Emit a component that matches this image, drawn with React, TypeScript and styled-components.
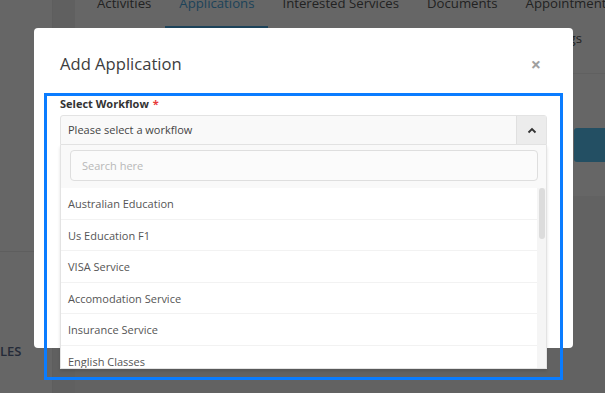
import React from "react";
import styled, { createGlobalStyle } from "styled-components";

const Global = createGlobalStyle`
  html, body { margin: 0; padding: 0; background: #fff; }
  body { font-family: "Open Sans", "Liberation Sans", sans-serif; }
  * { box-sizing: border-box; }
`;

const Screen = styled.div`
  position: relative;
  width: 605px;
  height: 393px;
  overflow: hidden;
  display: grid;
  grid-template-columns: 53px 22px 1fr;
  background: #fff;
`;

const Sidebar = styled.aside`
  display: flex;
  flex-direction: column;
  background: #fff;
  border-right: 1px solid #eaeaea;
  overflow: hidden;
`;

const SideSection = styled.div`
  height: 252px;
  border-bottom: 1px solid #ececec;
`;

const SideItem = styled.div`
  margin-top: 90px;
  margin-left: -11px;
  font-size: 13px;
  font-weight: 600;
  color: #5a6c8e;
  white-space: nowrap;
  line-height: 18px;
`;

const Gutter = styled.div`
  background: #f0f0f0;
`;

const Main = styled.main`
  display: flex;
  flex-direction: column;
  background: #f5f5f5;
  overflow: hidden;
`;

const TopCard = styled.div`
  background: #fff;
  display: flex;
  flex-direction: column;
`;

const TabBar = styled.nav`
  display: flex;
  margin-top: -7px;
  padding-left: 8px;
  white-space: nowrap;
`;

const Tab = styled.div<{ $active?: boolean }>`
  padding: 0 14px 13px;
  line-height: 20px;
  font-size: 13.2px;
  color: ${(p) => (p.$active ? "#4aa8e0" : "#555")};
  border-bottom: 2px solid ${(p) => (p.$active ? "#4aa8e0" : "transparent")};
`;

const SecondTab = styled.span`
  line-height: 20px;
  font-size: 13.2px;
  color: #555;
`;

const TabRow2 = styled.div`
  display: flex;
  justify-content: flex-end;
  padding: 0 23px 25px 0;
  border-bottom: 1px solid #f0f0f0;
`;

const Toolbar = styled.div`
  display: flex;
  justify-content: flex-end;
  padding-top: 54px;
  margin-right: -60px;
`;

const PrimaryButton = styled.button`
  height: 34px;
  width: 91px;
  border: none;
  border-radius: 3px;
  background: #58c6f8;
  color: #fff;
  font: inherit;
  font-size: 12px;
  padding-left: 40px;
`;

const TableHead = styled.div`
  height: 34px;
  background: #fff;
`;

const Backdrop = styled.div`
  position: absolute;
  inset: 0;
  background: rgba(0, 0, 0, 0.6);
`;

const Modal = styled.div`
  position: absolute;
  left: 34px;
  top: 28px;
  width: 539px;
  height: 320px;
  background: #fff;
  border-radius: 4px;
`;

const ModalHeader = styled.div`
  display: flex;
  align-items: center;
  justify-content: space-between;
  padding: 24px 32px 21px 26px;
`;

const Title = styled.h4`
  margin: 0;
  font-size: 16.6px;
  line-height: 24px;
  font-weight: 500;
  color: #3d3d3d;
`;

const Close = styled.button`
  border: none;
  background: none;
  padding: 0;
  font: inherit;
  font-size: 18px;
  font-weight: 700;
  line-height: 20px;
  color: #a0a0a0;
`;

const ModalBody = styled.div`
  padding: 0 26px;
`;

const Label = styled.label`
  display: block;
  font-size: 11px;
  font-weight: 700;
  line-height: 14px;
  color: #333;
  margin-bottom: 4px;
`;

const Required = styled.span`
  color: #e83a3a;
  margin-left: 4px;
`;

const SelectBox = styled.div`
  display: flex;
  height: 30px;
  border: 1px solid #e3e3e3;
  border-radius: 3px 3px 0 0;
  background: #f9f9f9;
`;

const SelectValue = styled.div`
  flex: 1;
  padding-left: 7px;
  font-size: 11px;
  line-height: 28px;
  color: #444;
`;

const Caret = styled.div`
  width: 30px;
  display: flex;
  align-items: center;
  justify-content: center;
  background: #ececec;
  border-left: 1px solid #e0e0e0;
`;

const Dropdown = styled.div`
  position: relative;
  border: 1px solid #e3e3e3;
  border-top: none;
  background: #fff;
  box-shadow: 0 2px 3px rgba(0, 0, 0, 0.12);
`;

const SearchArea = styled.div`
  background: #f9f9f9;
  padding: 5px 8px 7px 9px;
`;

const SearchInput = styled.input`
  width: 100%;
  height: 31px;
  border: 1px solid #dedede;
  border-radius: 4px;
  background: #fbfbfb;
  padding: 0 11px;
  font: inherit;
  font-size: 11px;
  color: #444;
  outline: none;
  &::placeholder { color: #b8b8b8; }
`;

const ListArea = styled.div`
  display: flex;
  height: 180px;
`;

const Options = styled.ul`
  flex: 1;
  margin: 0;
  padding: 0;
  list-style: none;
  overflow: hidden;
`;

const Option = styled.li`
  height: 31.5px;
  display: flex;
  align-items: center;
  padding-left: 7px;
  padding-top: 1px;
  font-size: 11px;
  color: #555;
  border-bottom: 1px solid #f2f2f2;
`;

const ScrollTrack = styled.div`
  width: 9px;
  padding: 0 1px 0 2px;
  background: #f5f5f5;
`;

const ScrollThumb = styled.div`
  height: 51px;
  border-radius: 3px;
  background: #dcdcdc;
`;

const Highlight = styled.div`
  position: absolute;
  left: 44px;
  top: 93px;
  width: 519px;
  height: 287px;
  border: 3px solid #0a7cff;
  pointer-events: none;
`;

const workflows = [
  "Australian Education",
  "Us Education F1",
  "VISA Service",
  "Accomodation Service",
  "Insurance Service",
  "English Classes",
  "PTE Classes",
  "IELTS Classes",
  "Skill Assessment",
  "Tourist Visa",
  "Student Visa",
  "Partner Visa",
  "Work Permit",
  "Permanent Residency",
  "Canada Education",
  "UK Education",
  "Career Counselling",
  "Health Cover",
  "Airport Pickup",
  "Job Placement",
];

export default function App() {
  return (
    <>
      <Global />
      <Screen>
        <Sidebar>
          <SideSection />
          <SideItem>FILES</SideItem>
        </Sidebar>
        <Gutter />
        <Main>
          <TopCard>
            <TabBar>
              <Tab>Activities</Tab>
              <Tab $active>Applications</Tab>
              <Tab>Interested Services</Tab>
              <Tab>Documents</Tab>
              <Tab>Appointments</Tab>
            </TabBar>
            <TabRow2>
              <SecondTab>Settings</SecondTab>
            </TabRow2>
            <Toolbar>
              <PrimaryButton>Add</PrimaryButton>
            </Toolbar>
            <TableHead />
          </TopCard>
        </Main>

        <Backdrop />
        <Modal>
          <ModalHeader>
            <Title>Add Application</Title>
            <Close aria-label="Close">×</Close>
          </ModalHeader>
          <ModalBody>
            <Label>
              Select Workflow<Required>*</Required>
            </Label>
            <SelectBox>
              <SelectValue>Please select a workflow</SelectValue>
              <Caret>
                <svg width="10" height="7" viewBox="0 0 10 7">
                  <polyline points="1.5,5.5 5,2 8.5,5.5" fill="none" stroke="#333" strokeWidth="1.8" />
                </svg>
              </Caret>
            </SelectBox>
            <Dropdown>
              <SearchArea>
                <SearchInput placeholder="Search here" />
              </SearchArea>
              <ListArea>
                <Options>
                  {workflows.map((w) => (
                    <Option key={w}>{w}</Option>
                  ))}
                </Options>
                <ScrollTrack>
                  <ScrollThumb />
                </ScrollTrack>
              </ListArea>
            </Dropdown>
          </ModalBody>
        </Modal>
        <Highlight />
      </Screen>
    </>
  );
}
